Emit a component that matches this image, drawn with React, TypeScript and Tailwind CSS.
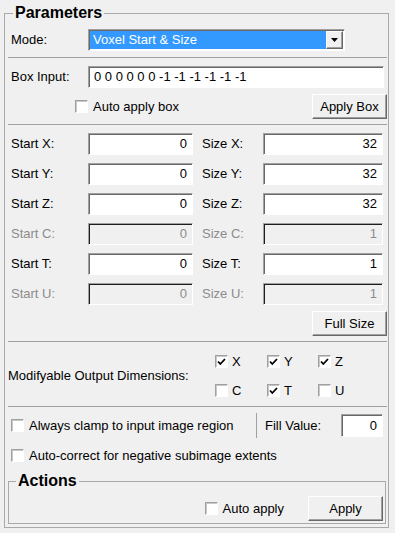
import React from "react";

const sunken =
  "border border-t-[#a0a0a0] border-l-[#a0a0a0] border-b-white border-r-white shadow-[inset_1px_1px_0_#696969]";
const sunkenOff =
  "border border-t-[#a0a0a0] border-l-[#a0a0a0] border-b-white border-r-white shadow-[inset_1px_1px_0_#1e1e1e]";
const raised =
  "border border-t-white border-l-white border-b-[#696969] border-r-[#696969] shadow-[inset_-1px_-1px_0_#a0a0a0]";

const Check = ({ on }: { on?: boolean }) => (
  <span
    className={`flex h-[13px] w-[13px] shrink-0 items-center justify-center bg-white ${sunken} shadow-[inset_1px_1px_0_#c8c8c8]`}
  >
    {on && (
      <svg width="9" height="8" viewBox="0 0 9 8">
        <path d="M1 3.5 L3.3 6 L8 1" fill="none" stroke="#000" strokeWidth="1.8" />
      </svg>
    )}
  </span>
);

const CheckLabel = ({ on, label, gap = "ml-[5px]" }: { on?: boolean; label: string; gap?: string }) => (
  <div className="flex items-center">
    <Check on={on} />
    <span className={gap}>{label}</span>
  </div>
);

const Btn = ({ label, w = "w-[75px]" }: { label: string; w?: string }) => (
  <button className={`flex h-[25px] ${w} items-center justify-center bg-[#f0f0f0] ${raised}`}>
    {label}
  </button>
);

const Field = ({ value, w, off }: { value: string; w: string; off?: boolean }) => (
  <div
    className={`flex h-[22px] ${w} items-center justify-end pr-[5px] ${
      off ? `bg-[#f0f0f0] text-[#8c8c8c] ${sunkenOff}` : `bg-white ${sunken}`
    }`}
  >
    {value}
  </div>
);

const Sep = ({ mt }: { mt: string }) => <div className={`${mt} border-t border-[#a0a0a0]`} />;

const rows = [
  { a: "Start X:", av: "0", b: "Size X:", bv: "32" },
  { a: "Start Y:", av: "0", b: "Size Y:", bv: "32" },
  { a: "Start Z:", av: "0", b: "Size Z:", bv: "32" },
  { a: "Start C:", av: "0", b: "Size C:", bv: "1", off: true },
  { a: "Start T:", av: "0", b: "Size T:", bv: "1" },
  { a: "Start U:", av: "0", b: "Size U:", bv: "1", off: true },
];

export default function App() {
  return (
    <div
      className="min-h-[533px] bg-[#f0f0f0] pl-[4px] pt-[4px] text-[13px] leading-[16px] text-black"
      style={{ fontFamily: '"Liberation Sans", Arial, sans-serif' }}
    >
      <fieldset className="w-[385px] border border-[#a9a9a9] pb-[3px] pl-[3px] pr-[1px]">
        <legend className="ml-[5px] px-[2px] text-[16px] font-bold leading-[18px]">Parameters</legend>

        <div className="mt-[7px] flex h-[22px] items-center pl-[3px]">
          <span className="w-[77px]">Mode:</span>
          <div className={`flex h-[22px] w-[257px] bg-white p-[1px] ${sunken}`}>
            <div className="flex flex-1 items-center bg-[#3399ff] pl-[3px] text-white">Voxel Start &amp; Size</div>
            <div className={`flex w-[17px] items-center justify-center bg-[#f0f0f0] ${raised}`}>
              <svg width="7" height="4" viewBox="0 0 7 4">
                <path d="M0 0 H7 L3.5 4 Z" fill="#000" />
              </svg>
            </div>
          </div>
        </div>

        <Sep mt="mt-[6px]" />

        <div className="mt-[8px] flex h-[22px] items-center pl-[3px]">
          <span className="w-[77px]">Box Input:</span>
          <div className={`flex h-[22px] w-[296px] items-center bg-white pl-[5px] ${sunken}`}>
            0 0 0 0 0 0 -1 -1 -1 -1 -1 -1
          </div>
        </div>

        <div className="mt-[6px] flex h-[25px] items-center">
          <div className="ml-[67px]">
            <CheckLabel label="Auto apply box" />
          </div>
          <div className="ml-auto">
            <Btn label="Apply Box" />
          </div>
        </div>

        <Sep mt="mt-[5px]" />

        <div className="mt-[8px] flex flex-col gap-[8px] pl-[3px]">
          {rows.map((r) => (
            <div key={r.a} className={`flex h-[22px] items-center ${r.off ? "text-[#8c8c8c]" : ""}`}>
              <span className="w-[77px]">{r.a}</span>
              <Field value={r.av} w="w-[105px]" off={r.off} />
              <span className="ml-[9px] w-[61px]">{r.b}</span>
              <Field value={r.bv} w="w-[120px]" off={r.off} />
            </div>
          ))}
        </div>

        <div className="mt-[6px] flex justify-end">
          <Btn label="Full Size" />
        </div>

        <Sep mt="mt-[5px]" />

        <div className="flex items-center pb-[7px] pt-[11px]">
          <span className="w-[207px] shrink-0 whitespace-nowrap">Modifyable Output Dimensions:</span>
          <div className="grid grid-cols-[52px_51px_51px] gap-y-[12px]">
            {[
              ["X", true],
              ["Y", true],
              ["Z", true],
              ["C", false],
              ["T", true],
              ["U", false],
            ].map(([l, on]) => (
              <div key={l as string} className="flex h-[17px] items-center">
                <CheckLabel label={l as string} on={on as boolean} gap="ml-[4px]" />
              </div>
            ))}
          </div>
        </div>

        <Sep mt="mt-0" />

        <div className="mt-[6px] flex h-[25px] items-center pl-[3px]">
          <div className="w-[245px]">
            <CheckLabel label="Always clamp to input image region" />
          </div>
          <div className="h-[25px] border-l border-[#a0a0a0]" />
          <span className="ml-[8px] w-[76px]">Fill Value:</span>
          <div className={`flex h-[23px] w-[42px] items-center justify-end bg-white pr-[5px] ${sunken}`}>0</div>
        </div>

        <div className="mt-[9px] flex h-[17px] items-center pl-[3px]">
          <CheckLabel label="Auto-correct for negative subimage extents" />
        </div>

        <fieldset className="mr-[1px] mt-[8px] border border-[#a9a9a9] pb-[2px] pr-[2px]">
          <legend className="ml-[7px] px-[2px] text-[16px] font-bold leading-[18px]">Actions</legend>
          <div className="mt-[6px] flex h-[25px] items-center justify-end">
            <CheckLabel label="Auto apply" />
            <div className="ml-[24px]">
              <Btn label="Apply" />
            </div>
          </div>
        </fieldset>
      </fieldset>
    </div>
  );
}
